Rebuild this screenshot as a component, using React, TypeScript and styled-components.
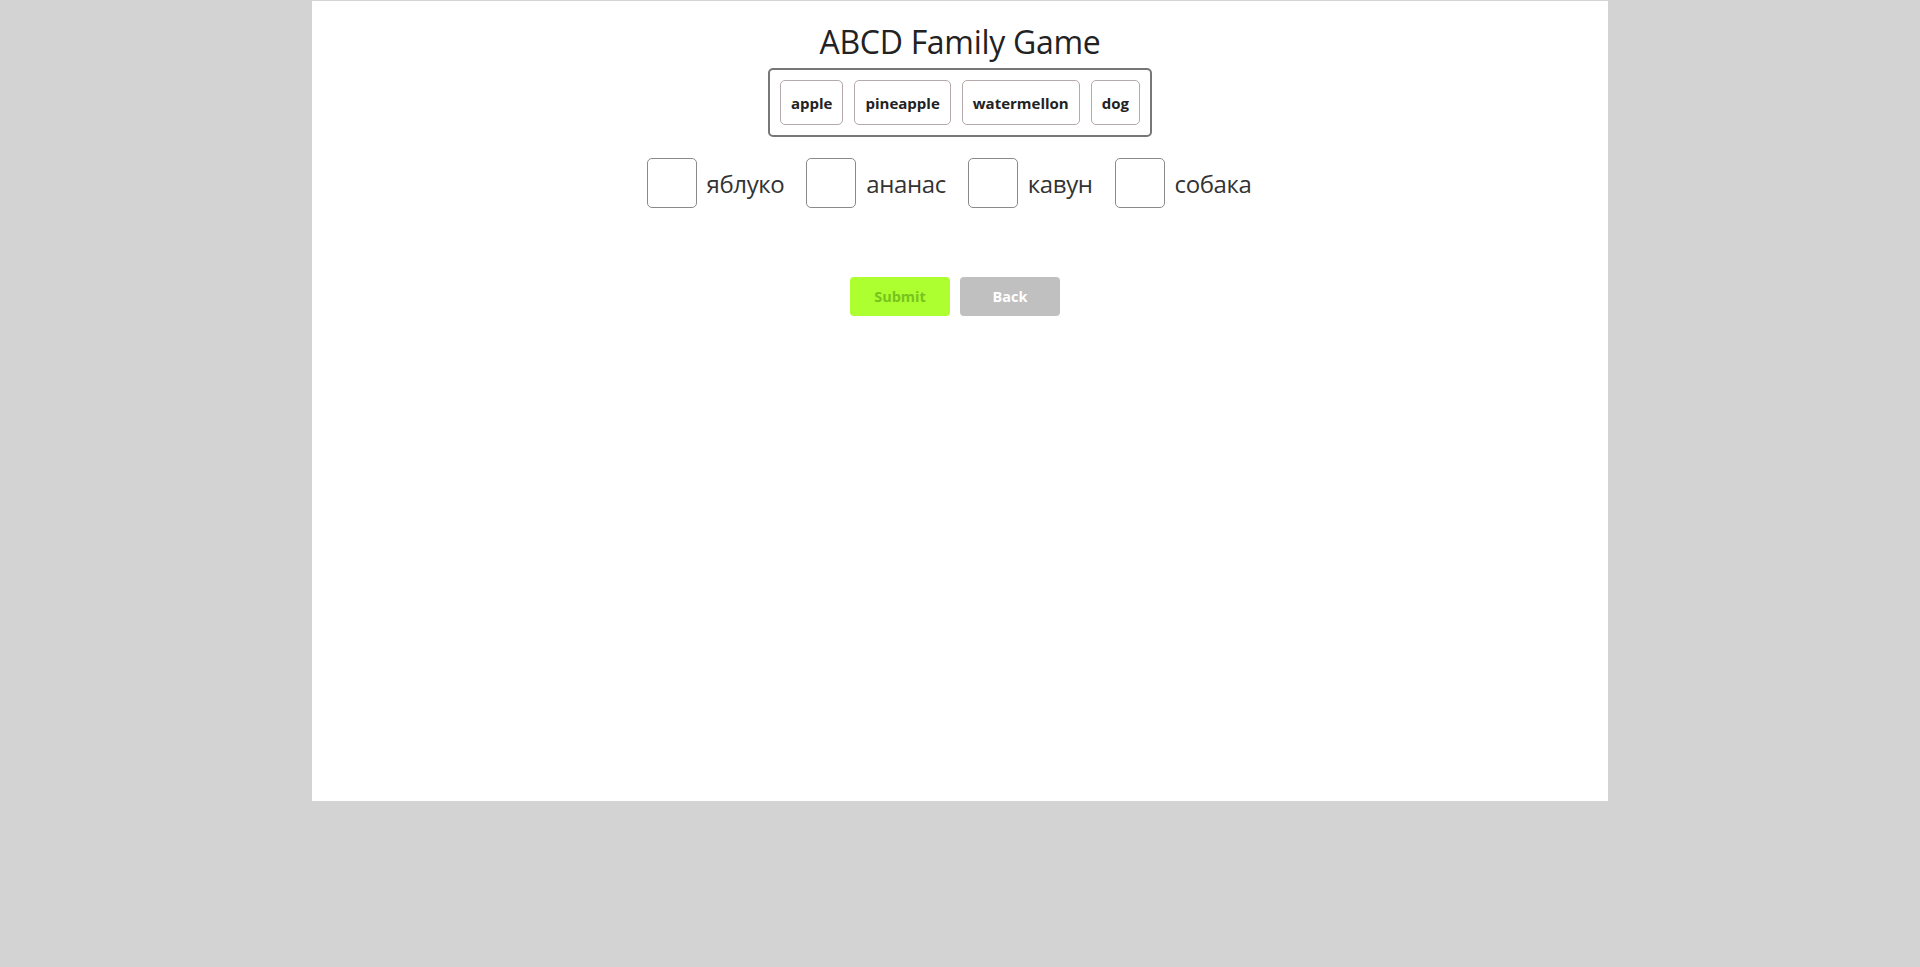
import React from "react";
import styled, { createGlobalStyle } from "styled-components";

const GlobalStyle = createGlobalStyle`
  html, body {
    margin: 0;
    padding: 0;
    background: #d3d3d3;
    font-family: "Open Sans", "Noto Sans", sans-serif;
  }
`;

const Page = styled.div`
  width: 1296px;
  height: 800px;
  margin: 1px auto 0;
  background: #ffffff;
  display: flex;
  flex-direction: column;
  align-items: center;
`;

const Title = styled.h1`
  margin: 20px 0 0;
  font-size: 32px;
  line-height: 42px;
  font-weight: 500;
  color: #222;
  letter-spacing: -0.3px;
`;

const WordBank = styled.div`
  margin-top: 5px;
  display: flex;
  gap: 11px;
  padding: 10px 10px;
  border: 2px solid #777;
  border-radius: 5px;
`;

const Chip = styled.div`
  height: 45px;
  box-sizing: border-box;
  padding: 0 10px;
  display: flex;
  align-items: center;
  border: 1px solid #b5a9a9;
  border-radius: 5px;
  font-size: 15px;
  font-weight: 700;
  color: #222;
`;

const Row = styled.div`
  margin-top: 21px;
  display: flex;
  align-items: center;
`;

const Item = styled.div`
  display: flex;
  align-items: center;
  margin-right: 22px;
`;

const DropBox = styled.div`
  width: 50px;
  height: 50px;
  box-sizing: border-box;
  border: 1px solid #8a8a8a;
  border-radius: 5px;
  margin-right: 10px;
`;

const Word = styled.span`
  font-size: 24px;
  color: #333;
  letter-spacing: -0.4px;
`;

const Buttons = styled.div`
  margin-top: 69px;
  display: flex;
`;

const Button = styled.button<{ $variant: "submit" | "back" }>`
  width: 100px;
  height: 39px;
  margin-right: 10px;
  border: none;
  border-radius: 4px;
  font-family: "Open Sans", "Noto Sans", sans-serif;
  font-size: 14.5px;
  font-weight: 700;
  cursor: pointer;
  background: ${(p) => (p.$variant === "submit" ? "#adff2f" : "#c0c0c0")};
  color: ${(p) => (p.$variant === "submit" ? "#78c41f" : "#ffffff")};
`;

const words = ["apple", "pineapple", "watermellon", "dog"];
const translations = ["яблуко", "ананас", "кавун", "собака"];

export default function App() {
  return (
    <>
      <GlobalStyle />
      <Page>
        <Title>ABCD Family Game</Title>
        <WordBank>
          {words.map((w) => (
            <Chip key={w}>{w}</Chip>
          ))}
        </WordBank>
        <Row>
          {translations.map((t) => (
            <Item key={t}>
              <DropBox />
              <Word>{t}</Word>
            </Item>
          ))}
        </Row>
        <Buttons>
          <Button $variant="submit">Submit</Button>
          <Button $variant="back">Back</Button>
        </Buttons>
      </Page>
    </>
  );
}
